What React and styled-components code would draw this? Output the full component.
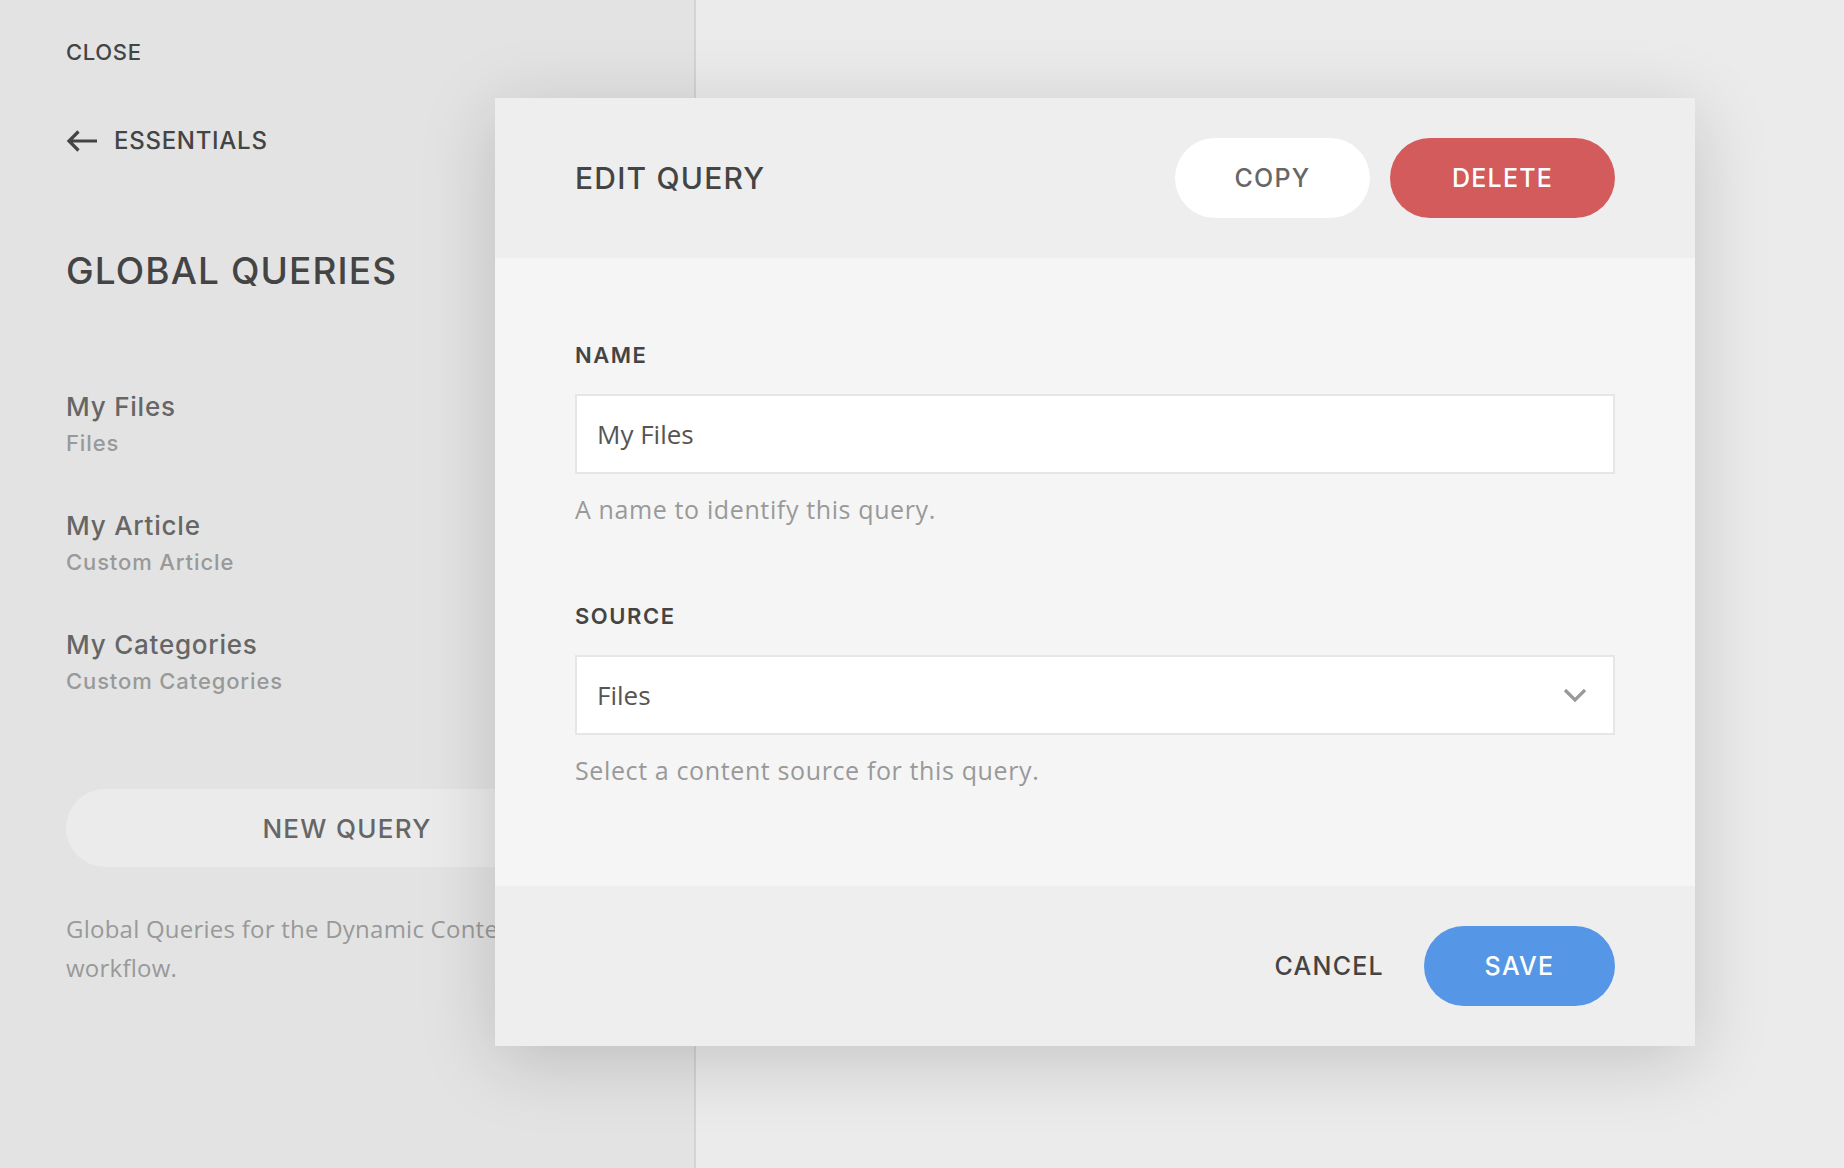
import React from "react";
import styled, { createGlobalStyle } from "styled-components";

const GlobalStyle = createGlobalStyle`
  html, body {
    margin: 0;
    padding: 0;
    background: #ebebeb;
  }
  * {
    box-sizing: border-box;
  }
`;

const heading = `"Inter", "Noto Sans", sans-serif`;
const body = `"Open Sans", "Noto Sans", sans-serif`;

const Page = styled.div`
  position: relative;
  display: flex;
  width: 1844px;
  height: 1168px;
  overflow: hidden;
  background: #ebebeb;
`;

const Sidebar = styled.aside`
  width: 696px;
  flex-shrink: 0;
  background: #e3e3e3;
  border-right: 2px solid #d3d3d3;
  padding: 38px 66px 0 66px;
  display: flex;
  flex-direction: column;
`;

const TextLink = styled.a`
  display: flex;
  align-items: center;
  gap: 16px;
  font-family: ${heading};
  font-weight: 500;
  font-size: ${(p) => p.size || 22}px;
  letter-spacing: 0.03em;
  color: #444;
  text-transform: uppercase;
  line-height: 28px;
  margin-top: ${(p) => p.top || 0}px;
  cursor: pointer;
`;

const SideTitle = styled.h1`
  margin: 94px 0 0 0;
  font-family: ${heading};
  font-weight: 500;
  font-size: 37px;
  line-height: 44px;
  letter-spacing: 0.03em;
  color: #444;
`;

const QueryList = styled.ul`
  list-style: none;
  margin: 98px 0 0 0;
  padding: 0;
  display: flex;
  flex-direction: column;
  gap: 53px;
`;

const QueryItem = styled.li`
  display: flex;
  flex-direction: column;
  gap: 6px;
`;

const QueryName = styled.span`
  font-family: ${heading};
  font-weight: 500;
  font-size: 26px;
  line-height: 32px;
  letter-spacing: 0.03em;
  color: #666;
`;

const QuerySource = styled.span`
  font-family: ${heading};
  font-weight: 500;
  font-size: 22px;
  line-height: 28px;
  letter-spacing: 0.04em;
  color: #999;
`;

const NewQueryButton = styled.button`
  margin-top: 94px;
  width: 100%;
  height: 78px;
  border: none;
  border-radius: 39px;
  background: #ebebeb;
  font-family: ${heading};
  font-weight: 500;
  font-size: 26px;
  letter-spacing: 0.05em;
  color: #666;
  text-transform: uppercase;
`;

const Description = styled.p`
  margin: 42px 0 0 0;
  font-family: ${body};
  font-weight: 400;
  font-size: 24px;
  line-height: 39px;
  letter-spacing: 0.01em;
  color: #999;
`;

const Backdrop = styled.main`
  flex: 1;
`;

const Modal = styled.section`
  position: absolute;
  left: 495px;
  top: 98px;
  width: 1200px;
  display: flex;
  flex-direction: column;
  box-shadow: 0 14px 70px rgba(0, 0, 0, 0.17);
`;

const ModalBar = styled.div`
  height: ${(p) => p.h}px;
  padding: 0 80px;
  background: #eeeeee;
  display: flex;
  align-items: center;
  justify-content: ${(p) => p.justify || "space-between"};
  gap: 20px;
`;

const ModalTitle = styled.h2`
  margin: 0;
  font-family: ${heading};
  font-weight: 500;
  font-size: 30px;
  letter-spacing: 0.04em;
  color: #444;
`;

const ButtonGroup = styled.div`
  display: flex;
  gap: 20px;
`;

const PillButton = styled.button`
  height: 80px;
  width: ${(p) => p.w}px;
  border: none;
  border-radius: 40px;
  background: ${(p) => p.bg};
  color: ${(p) => p.fg};
  font-family: ${heading};
  font-weight: 500;
  font-size: 25px;
  letter-spacing: 0.05em;
  text-transform: uppercase;
  cursor: pointer;
`;

const PlainButton = styled.button`
  border: none;
  background: none;
  padding: 0;
  margin-right: 20px;
  font-family: ${heading};
  font-weight: 500;
  font-size: 25px;
  letter-spacing: 0.05em;
  color: #444;
  text-transform: uppercase;
  cursor: pointer;
`;

const ModalBody = styled.div`
  background: #f5f5f5;
  padding: 83px 80px 98px 80px;
  display: flex;
  flex-direction: column;
  gap: 75px;
`;

const Field = styled.div`
  display: flex;
  flex-direction: column;
`;

const Label = styled.label`
  font-family: ${heading};
  font-weight: 600;
  font-size: 22px;
  line-height: 28px;
  letter-spacing: 0.07em;
  color: #444;
  text-transform: uppercase;
  margin-bottom: 25px;
`;

const InputBox = styled.div`
  position: relative;
  height: 80px;
  background: #fff;
  border: 2px solid #e6e6e6;
  display: flex;
  align-items: center;
  padding: 0 20px;
  font-family: ${body};
  font-size: 26px;
  color: #555;
`;

const Chevron = styled.svg`
  position: absolute;
  right: 26px;
  top: 50%;
  transform: translateY(-50%);
`;

const Hint = styled.p`
  margin: 17px 0 0 0;
  font-family: ${body};
  font-weight: 400;
  font-size: 25px;
  line-height: 36px;
  letter-spacing: 0.025em;
  color: #999;
`;

function ArrowLeft() {
  return (
    <svg width="32" height="24" viewBox="0 0 32 24" fill="none">
      <path
        d="M31 12H3.5M12.5 2.5L3 12l9.5 9.5"
        stroke="#444"
        strokeWidth="3.2"
      />
    </svg>
  );
}

const queries = [
  { name: "My Files", source: "Files" },
  { name: "My Article", source: "Custom Article" },
  { name: "My Categories", source: "Custom Categories" },
];

export default function App() {
  return (
    <>
      <GlobalStyle />
      <Page>
        <Sidebar>
          <TextLink size={22}>Close</TextLink>
          <TextLink size={24} top={61}>
            <ArrowLeft />
            Essentials
          </TextLink>
          <SideTitle>GLOBAL QUERIES</SideTitle>
          <QueryList>
            {queries.map((q) => (
              <QueryItem key={q.name}>
                <QueryName>{q.name}</QueryName>
                <QuerySource>{q.source}</QuerySource>
              </QueryItem>
            ))}
          </QueryList>
          <NewQueryButton>New Query</NewQueryButton>
          <Description>
            Global Queries for the Dynamic Content workflow.
          </Description>
        </Sidebar>
        <Backdrop />

        <Modal>
          <ModalBar h={160}>
            <ModalTitle>EDIT QUERY</ModalTitle>
            <ButtonGroup>
              <PillButton w={195} bg="#ffffff" fg="#666">
                Copy
              </PillButton>
              <PillButton w={225} bg="#d35b5b" fg="#fff">
                Delete
              </PillButton>
            </ButtonGroup>
          </ModalBar>
          <ModalBody>
            <Field>
              <Label>Name</Label>
              <InputBox>My Files</InputBox>
              <Hint>A name to identify this query.</Hint>
            </Field>
            <Field>
              <Label>Source</Label>
              <InputBox>
                Files
                <Chevron width="24" height="14" viewBox="0 0 24 14" fill="none">
                  <path d="M2 2l10 10L22 2" stroke="#999" strokeWidth="3.2" />
                </Chevron>
              </InputBox>
              <Hint>Select a content source for this query.</Hint>
            </Field>
          </ModalBody>
          <ModalBar h={160} justify="flex-end">
            <PlainButton>Cancel</PlainButton>
            <PillButton w={191} bg="#5596e6" fg="#fff">
              Save
            </PillButton>
          </ModalBar>
        </Modal>
      </Page>
    </>
  );
}
